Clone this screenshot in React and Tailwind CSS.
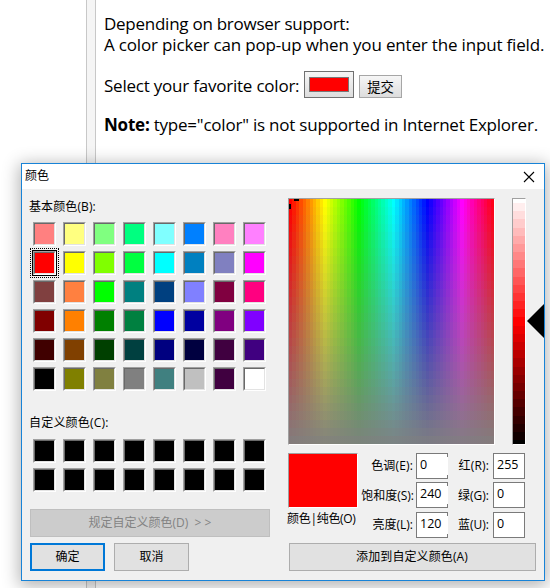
const BASIC_COLORS = [
  ['#ff8080', '#ffff80', '#80ff80', '#00ff80', '#80ffff', '#0080ff', '#ff80c0', '#ff80ff'],
  ['#ff0000', '#ffff00', '#80ff00', '#00ff40', '#00ffff', '#0080c0', '#8080c0', '#ff00ff'],
  ['#804040', '#ff8040', '#00ff00', '#008080', '#004080', '#8080ff', '#800040', '#ff0080'],
  ['#800000', '#ff8000', '#008000', '#008040', '#0000ff', '#0000a0', '#800080', '#8000ff'],
  ['#400000', '#804000', '#004000', '#004040', '#000080', '#000040', '#400040', '#400080'],
  ['#000000', '#808000', '#808040', '#808080', '#408080', '#c0c0c0', '#400040', '#ffffff'],
];

const CUSTOM_COLORS = [Array(8).fill('#000000'), Array(8).fill('#000000')];

// The hue/saturation field is quantised to 60 hues by 30 saturations.
const HUES = Array.from({ length: 60 }, (_, i) => i * 6);
const SATURATION_ROWS = 30;

function hueColumn(hue) {
  const stops = [];
  for (let i = 0; i < SATURATION_ROWS; i++) {
    const color = `hsl(${hue}, ${((SATURATION_ROWS - i) / SATURATION_ROWS) * 100}%, 50%)`;
    const from = Math.round((i * 245) / SATURATION_ROWS);
    const to = Math.round(((i + 1) * 245) / SATURATION_ROWS);
    stops.push(`${color} ${from}px ${to}px`);
  }
  return `linear-gradient(to bottom, ${stops.join(', ')})`;
}

const LUMINANCES = Array.from({ length: 31 }, (_, i) => 100 - (i * 100) / 30);

function Sunken({ className = '', children }) {
  return (
    <div className={`border border-t-[#a0a0a0] border-l-[#a0a0a0] border-r-white border-b-white ${className}`}>
      {children}
    </div>
  );
}

function Swatch({ color, selected }) {
  return (
    <div className="relative h-6 w-[23px]">
      <Sunken className="h-full">
        <div
          className="h-full border border-t-[#696969] border-l-[#696969] border-r-[#e3e3e3] border-b-[#e3e3e3]"
          style={{ backgroundColor: color }}
        />
      </Sunken>
      {selected && (
        <>
          <div className="absolute -top-px -left-px h-[26px] w-[25px] border border-black" />
          <div className="absolute -top-[3px] -left-[3px] h-[30px] w-[29px] border border-dotted border-black" />
        </>
      )}
    </div>
  );
}

function SwatchGrid({ rows, selected }) {
  return (
    <div className="ml-[3px] grid grid-cols-[repeat(8,23px)] gap-x-[7px] gap-y-[5px]">
      {rows.flat().map((color, i) => (
        <Swatch key={i} color={color} selected={i === selected} />
      ))}
    </div>
  );
}

function DialogButton({ className = '', children }) {
  return (
    <button className={`flex h-7 items-center justify-center whitespace-nowrap ${className}`}>
      {children}
    </button>
  );
}

function Field({ label, value, notched, labelClass, className = '' }) {
  return (
    <div className={`flex h-[26px] items-center justify-end ${className}`}>
      <span className={`whitespace-nowrap ${labelClass}`}>{label}</span>
      <div className="relative flex h-[26px] w-8 shrink-0 items-start border border-[#7a7a7a] bg-white pt-[3px] pl-[3px] text-[12.5px] leading-4">
        {value}
        {notched && <div className="absolute top-[3px] -right-px h-[18px] w-px bg-white" />}
      </div>
    </div>
  );
}

function ColorDialog() {
  return (
    <div className="absolute top-[163px] left-[21px] h-[418px] w-[524px] border border-[#1883d7] bg-[#f0f0f0] font-['Open_Sans','Noto_Sans_CJK_SC',sans-serif] text-[12px] leading-4 text-black shadow-[0_3px_16px_2px_rgba(0,0,0,0.3)]">
      <div className="flex h-[25px] items-center justify-between bg-white pr-[9px] pl-[3px]">
        <span className="-mt-px">颜色</span>
        <svg width="12" height="12" viewBox="0 0 12 12" stroke="#000" strokeWidth="1.1" fill="none">
          <path d="M1 1 11 11M11 1 1 11" />
        </svg>
      </div>

      <div className="flex">
        <div className="w-[266px] pl-2">
          <div className="-ml-px h-[33px] pt-[10px] tracking-[0.1px]">基本颜色(B):</div>
          <SwatchGrid rows={BASIC_COLORS} selected={8} />
          <div className="-ml-px h-[48px] pt-[24px] tracking-[0.2px]">自定义颜色(C):</div>
          <SwatchGrid rows={CUSTOM_COLORS} />
          <DialogButton className="mt-[17px] w-[240px] border border-[#bfbfbf] bg-[#cccccc] text-[#838383]">
            规定自定义颜色(D)&nbsp; &gt; &gt;
          </DialogButton>
          <div className="mt-[6px] flex gap-[9px]">
            <DialogButton className="w-[75px] border-2 border-[#0078d7] bg-[#e1e1e1]">确定</DialogButton>
            <DialogButton className="w-[75px] border border-[#adadad] bg-[#e1e1e1]">取消</DialogButton>
          </div>
        </div>

        <div className="flex-1 pt-[9px]">
          <div className="flex">
            <Sunken className="relative h-[247px] w-[207px]">
              <div className="flex h-full">
                {HUES.map((hue) => (
                  <div key={hue} className="h-full flex-1" style={{ backgroundImage: hueColumn(hue) }} />
                ))}
              </div>
              <div className="absolute top-0 left-[5px] h-[2px] w-[5px] bg-black" />
              <div className="absolute top-[5px] left-0 h-[5px] w-[2px] bg-black" />
            </Sunken>
            <Sunken className="ml-[17px] flex h-[247px] w-[14px] flex-col">
              {LUMINANCES.map((lum, i) => (
                <div
                  key={i}
                  className={i === 0 || i === 30 ? 'flex-1' : 'flex-[2]'}
                  style={{ backgroundColor: `hsl(0, 100%, ${lum}%)` }}
                />
              ))}
            </Sunken>
            <svg className="mt-[106px] ml-px" width="17" height="34" viewBox="0 0 17 34">
              <path d="M0 17 17 0V34Z" fill="#000" />
            </svg>
          </div>

          <div className="mt-[8px] flex">
            <div className="w-[70px]">
              <Sunken className="h-[55px] bg-[#ff0000]" />
              <div className="-ml-px mt-[3px] whitespace-nowrap tracking-[-0.3px]">颜色|纯色(O)</div>
            </div>
            <div className="w-[90px]">
              <Field label="色调(E):" value="0" notched labelClass="mr-[3px] tracking-[0.15px]" />
              <Field label="饱和度(S):" value="240" notched labelClass="mr-[2px] pt-[2px]" className="mt-[3px]" />
              <Field label="亮度(L):" value="120" notched labelClass="mr-[3px]" className="mt-[4px]" />
            </div>
            <div className="w-[77px]">
              <Field label="红(R):" value="255" labelClass="mr-[4px] tracking-[0.15px]" />
              <Field label="绿(G):" value="0" labelClass="mr-[4px] pt-[2px]" className="mt-[3px]" />
              <Field label="蓝(U):" value="0" labelClass="mr-[4px]" className="mt-[4px]" />
            </div>
          </div>

          <DialogButton className="mt-[5px] ml-px w-[247px] border border-[#adadad] bg-[#e1e1e1]">
            <span className="-ml-px tracking-[0.1px]">添加到自定义颜色(A)</span>
          </DialogButton>
        </div>
      </div>
    </div>
  );
}

export default function App() {
  return (
    <div className="relative flex h-[588px] w-[550px] overflow-hidden bg-white font-['Open_Sans','Noto_Sans_CJK_SC',sans-serif] text-[17px] leading-[21px] text-black">
      <div className="w-[86px] shrink-0" />
      <div className="w-[10px] shrink-0 border-x border-[#c8c8c8] bg-[#f5f5f5]" />
      <div className="flex-1 whitespace-nowrap pt-[13px] pl-2">
        <p className="tracking-[-0.26px]">Depending on browser support:</p>
        <p className="tracking-[-0.17px]">A color picker can pop-up when you enter the input field.</p>
        <div className="mt-[16px] flex h-[27px] items-end">
          <span className="mb-[2px] w-[200px] tracking-[-0.22px]">Select your favorite color:</span>
          <div className="mr-[5px] h-[27px] w-[50px] border border-[#707070] bg-linear-to-b from-[#f6f6f6] to-[#dddddd] px-1 py-[5px]">
            <div className="h-[15px] border border-[#777777] bg-[#ff0000]" />
          </div>
          <button className="flex h-[23px] w-[43px] items-center justify-center border border-[#a6a6a6] bg-linear-to-b from-[#f6f6f6] to-[#dddddd] pt-px text-[13.33px]">
            提交
          </button>
        </div>
        <p className="mt-[16px] tracking-[-0.22px]">
          <b>Note:</b> type="color" is not supported in Internet Explorer.
        </p>
      </div>
      <ColorDialog />
    </div>
  );
}
